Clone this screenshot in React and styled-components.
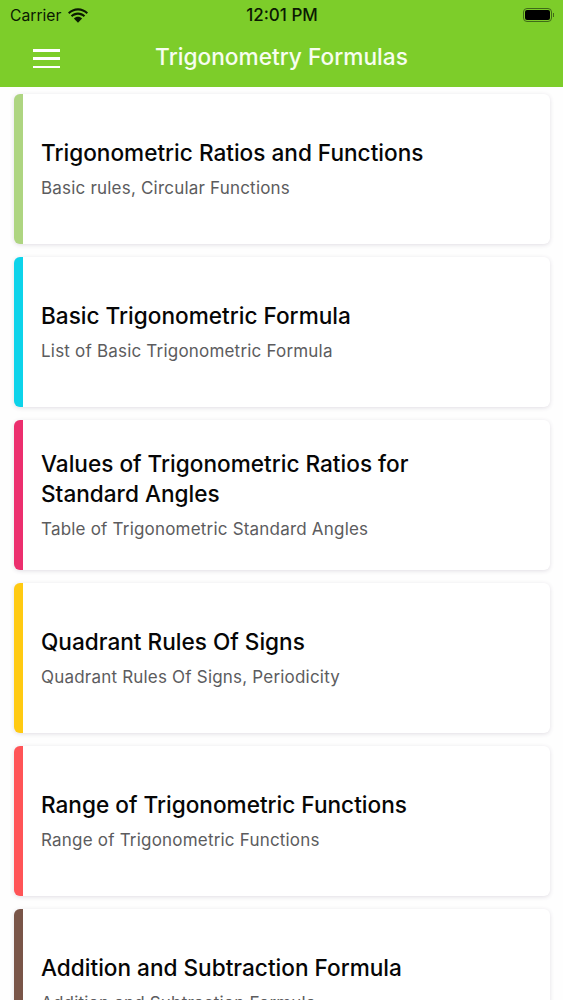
import React from 'react';
import styled, { createGlobalStyle } from 'styled-components';

const GlobalStyle = createGlobalStyle`
  html, body {
    margin: 0;
    height: 100%;
    overflow: hidden;
    background: #fefefe;
    font-family: Inter, "Noto Sans", sans-serif;
  }
`;

const Page = styled.div`
  width: 563px;
  height: 1000px;
  overflow: hidden;
`;

const Header = styled.header`
  height: 87px;
  background: #7dcd2a;
`;

const StatusBar = styled.div`
  height: 30px;
  padding: 0 9px 0 10px;
  display: grid;
  grid-template-columns: 1fr auto 1fr;
  align-items: center;
  color: #0b1a02;
`;

const Carrier = styled.div`
  display: flex;
  align-items: center;
  gap: 7px;
  font-size: 15.7px;
`;

const Clock = styled.div`
  font-weight: 500;
  font-size: 17px;
`;

const BatteryWrap = styled.div`
  justify-self: end;
  display: flex;
  align-items: center;
  gap: 1px;
`;

const Battery = styled.div`
  width: 29px;
  height: 14px;
  box-sizing: border-box;
  border: 1px solid #3f6a18;
  border-radius: 4px;
  padding: 1px;
  display: flex;
  & > div {
    flex: 1;
    background: #000;
    border-radius: 2px;
  }
`;

const BatteryCap = styled.div`
  width: 1px;
  height: 4px;
  background: #3f6a18;
`;

const NavBar = styled.div`
  height: 57px;
  padding: 0 33px 4px;
  box-sizing: border-box;
  position: relative;
  display: flex;
  align-items: center;
  justify-content: center;
`;

const Menu = styled.button`
  position: absolute;
  left: 33px;
  top: 19px;
  width: 27px;
  height: 19px;
  padding: 0;
  border: 0;
  background: none;
  display: flex;
  flex-direction: column;
  justify-content: space-between;
  & > span {
    display: block;
    height: 2.5px;
    background: #fff;
  }
`;

const Title = styled.h1`
  margin: 0;
  color: #f7fdf0;
  font-size: 22.7px;
  font-weight: 500;
`;

const List = styled.main`
  padding: 7px 13px 0 14px;
  display: flex;
  flex-direction: column;
  gap: 13px;
`;

const Card = styled.article`
  height: 150px;
  flex-shrink: 0;
  box-sizing: border-box;
  background: #fff;
  border-radius: 6px;
  border-left: 9.5px solid ${p => p.$color};
  padding: 0 60px 0 18px;
  display: flex;
  flex-direction: column;
  justify-content: center;
  gap: 8px;
  box-shadow: 0 1px 4px rgba(70, 50, 90, 0.16);
`;

const CardTitle = styled.h2`
  margin: 0;
  color: #060606;
  font-size: 22.6px;
  line-height: 30px;
  font-weight: 500;
`;

const CardSub = styled.p`
  margin: 0;
  color: #5c5c5e;
  font-size: 17px;
  line-height: 24px;
  letter-spacing: 0.2px;
`;

const WifiIcon = () => (
  <svg width="20" height="15" viewBox="0 0 20 15" fill="#0b1a02">
    <path d="M10 2.6c3.4 0 6.4 1.3 8.6 3.5L20 4.6C17.4 1.9 13.9 0.3 10 0.3S2.6 1.9 0 4.6l1.4 1.5C3.6 3.9 6.6 2.6 10 2.6z" />
    <path d="M10 6.8c2.2 0 4.2 0.9 5.7 2.3l1.5-1.6C15.3 5.7 12.8 4.6 10 4.6S4.7 5.7 2.8 7.5l1.5 1.6C5.8 7.7 7.8 6.8 10 6.8z" />
    <path d="M10 8.8c-1.6 0-3 0.6-4.1 1.7L10 14.8l4.1-4.3C13 9.4 11.6 8.8 10 8.8z" />
  </svg>
);

const items = [
  { color: '#aed581', title: 'Trigonometric Ratios and Functions', sub: 'Basic rules, Circular Functions' },
  { color: '#0dd3ea', title: 'Basic Trigonometric Formula', sub: 'List of Basic Trigonometric Formula' },
  { color: '#ec2f6e', title: 'Values of Trigonometric Ratios for Standard Angles', sub: 'Table of Trigonometric Standard Angles' },
  { color: '#ffca12', title: 'Quadrant Rules Of Signs', sub: 'Quadrant Rules Of Signs, Periodicity' },
  { color: '#ff5457', title: 'Range of Trigonometric Functions', sub: 'Range of Trigonometric Functions' },
  { color: '#795548', title: 'Addition and Subtraction Formula', sub: 'Addition and Subtraction Formula' },
];

export default function App() {
  return (
    <Page>
      <GlobalStyle />
      <Header>
        <StatusBar>
          <Carrier>Carrier <WifiIcon /></Carrier>
          <Clock>12:01 PM</Clock>
          <BatteryWrap>
            <Battery><div /></Battery>
            <BatteryCap />
          </BatteryWrap>
        </StatusBar>
        <NavBar>
          <Menu aria-label="Menu"><span /><span /><span /></Menu>
          <Title>Trigonometry Formulas</Title>
        </NavBar>
      </Header>
      <List>
        {items.map(item => (
          <Card key={item.title} $color={item.color}>
            <CardTitle>{item.title}</CardTitle>
            <CardSub>{item.sub}</CardSub>
          </Card>
        ))}
      </List>
    </Page>
  );
}
